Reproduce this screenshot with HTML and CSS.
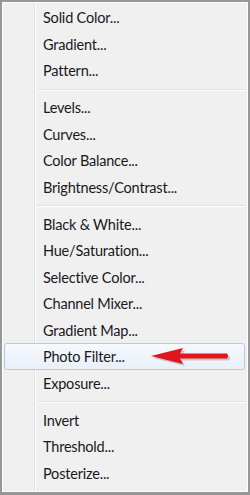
FILE: index.html
```html
<!DOCTYPE html>
<html lang="en">
<head>
<meta charset="UTF-8" />
<title>Adjustment Menu</title>
<link rel="stylesheet" href="styles.css">
</head>
<body>
<div class="menu">
<div class="item">Solid Color...</div>
<div class="item">Gradient...</div>
<div class="item">Pattern...</div>
<div class="sep"></div>
<div class="item">Levels...</div>
<div class="item">Curves...</div>
<div class="item">Color Balance...</div>
<div class="item">Brightness/Contrast...</div>
<div class="sep"></div>
<div class="item">Black &amp; White...</div>
<div class="item">Hue/Saturation...</div>
<div class="item">Selective Color...</div>
<div class="item">Channel Mixer...</div>
<div class="item">Gradient Map...</div>
<div class="item hover">Photo Filter...
<svg class="arrow" width="90" height="24" viewBox="0 0 90 24">
<path d="M4 13 L36 5 L33 10.5 L80 10.5 Q82 13 80 15.5 L33 15.5 L36 21 Z" fill="#9a8a8a" opacity="0.45"/>
<path d="M2 11 L34 3 L31 8.5 L78 8.5 Q80 11 78 13.5 L31 13.5 L34 19 Z" fill="#e3141b"/>
</svg>
</div>
<div class="item">Exposure...</div>
<div class="sep"></div>
<div class="item">Invert</div>
<div class="item">Threshold...</div>
<div class="item">Posterize...</div>
</div>
</body>
</html>
```

FILE: styles.css
```css
body { margin: 0; background: #fff; }
.menu {
  width: 250px; height: 495px; box-sizing: border-box;
  border: 2px solid #979797; border-bottom-width: 3px;
  box-shadow: inset 0 0 0 1px #fff;
  padding-top: 2px;
  background: linear-gradient(to right, transparent 32px, #e1e1e1 32px, #e1e1e1 33px, #fff 33px, #fff 34px, transparent 34px), #f0f0f0;
  font-family: Lato, "Open Sans", sans-serif;
  font-size: 14.5px; letter-spacing: -0.2px; color: #18181e;
}
.item {
  position: relative;
  height: 26.5px; line-height: 26.5px;
  margin: 0 3px 0 2px; padding-left: 38px;
  border: 1px solid transparent; box-sizing: border-box;
  border-radius: 3px;
}
.hover {
  border-color: #b4cbe6;
  background: linear-gradient(#f6f9fd, #e9f0f9);
}
.sep {
  height: 0; margin: 5px 3px 3.5px 35px;
  border-top: 1px solid #e0e0e0; border-bottom: 1px solid #fff;
}
.arrow { position: absolute; left: 144px; top: 1px; }
```
